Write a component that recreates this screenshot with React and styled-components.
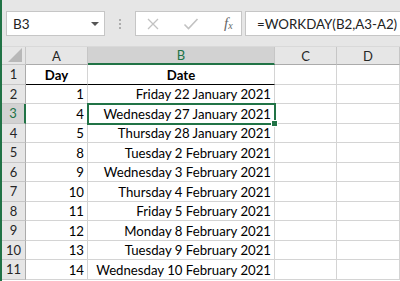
import React from 'react';
import styled, {createGlobalStyle} from 'styled-components';

const GlobalStyle = createGlobalStyle`
  html, body {
    margin: 0;
    padding: 0;
    background: #ffffff;
  }
  body {
    font-family: 'Lato', 'Liberation Sans', sans-serif;
  }
`;

const rows = [
    {n: 1, day: 'Day', date: 'Date', head: true},
    {n: 2, day: '1', date: 'Friday 22 January 2021'},
    {n: 3, day: '4', date: 'Wednesday 27 January 2021', active: true},
    {n: 4, day: '5', date: 'Thursday 28 January 2021'},
    {n: 5, day: '8', date: 'Tuesday 2 February 2021'},
    {n: 6, day: '9', date: 'Wednesday 3 February 2021'},
    {n: 7, day: '10', date: 'Thursday 4 February 2021'},
    {n: 8, day: '11', date: 'Friday 5 February 2021'},
    {n: 9, day: '12', date: 'Monday 8 February 2021'},
    {n: 10, day: '13', date: 'Tuesday 9 February 2021'},
    {n: 11, day: '14', date: 'Wednesday 10 February 2021'},
];

function App() {
    return (
        <Window>
            <GlobalStyle/>
            <FormulaBar>
                <NameBox>
                    <span>B3</span>
                    <Caret/>
                </NameBox>
                <Grip>
                    <i/><i/><i/>
                </Grip>
                <ButtonsBox>
                    <IconButton>
                        <svg width="14" height="14" viewBox="0 0 14 14">
                            <path d="M2 2 L12 12 M12 2 L2 12" stroke="#c2c2c2" strokeWidth="1.3" fill="none"/>
                        </svg>
                    </IconButton>
                    <IconButton>
                        <svg width="16" height="14" viewBox="0 0 16 14">
                            <path d="M1.5 7.5 L5.5 11.5 L14.5 2" stroke="#c2c2c2" strokeWidth="1.6" fill="none"/>
                        </svg>
                    </IconButton>
                    <Fx>f<sub>x</sub></Fx>
                </ButtonsBox>
                <FormulaBox>=WORKDAY(B2,A3-A2)</FormulaBox>
            </FormulaBar>
            <Sheet>
                <Corner>
                    <svg width="14" height="14" viewBox="0 0 14 14">
                        <path d="M14 0 L14 14 L0 14 Z" fill="#b8b8b8"/>
                    </svg>
                </Corner>
                <ColHead>A</ColHead>
                <ColHead $active>B</ColHead>
                <ColHead>C</ColHead>
                <ColHead>D</ColHead>
                {rows.map(r => (
                    <React.Fragment key={r.n}>
                        <RowHead $active={r.active}>{r.n}</RowHead>
                        <Cell $align={r.head ? 'center' : 'right'} $bold={r.head} $underline={r.head}>{r.day}</Cell>
                        <Cell $align={r.head ? 'center' : 'right'} $bold={r.head} $underline={r.head}
                              $selected={r.active}>
                            {r.date}
                            {r.active && <Handle/>}
                        </Cell>
                        <Cell/>
                        <Cell/>
                    </React.Fragment>
                ))}
            </Sheet>
        </Window>
    );
}

const Window = styled.div`
  width: 400px;
  height: 281px;
  box-sizing: border-box;
  border-left: 2px solid #217346;
  background: #ffffff;
  overflow: hidden;
`;

const FormulaBar = styled.div`
  height: 47px;
  box-sizing: border-box;
  background: #e6e6e6;
  display: flex;
  align-items: flex-start;
  padding: 11px 0 0 4px;
  border-bottom: 1px solid #d9d9d9;
`;

const Box = styled.div`
  height: 25px;
  box-sizing: border-box;
  background: #ffffff;
  border: 1px solid #c6c6c6;
  display: flex;
  align-items: center;
`;

const NameBox = styled(Box)`
  width: 99px;
  justify-content: space-between;
  padding: 0 5px 0 6px;
  font-size: 13.5px;
  color: #222;
`;

const Caret = styled.span`
  width: 0;
  height: 0;
  border-left: 4px solid transparent;
  border-right: 4px solid transparent;
  border-top: 4px solid #555;
`;

const Grip = styled.div`
  width: 30px;
  height: 25px;
  display: flex;
  flex-direction: column;
  align-items: center;
  justify-content: center;
  gap: 2px;

  i {
    width: 2px;
    height: 2px;
    background: #9a9a9a;
    border-radius: 1px;
  }
`;

const ButtonsBox = styled(Box)`
  width: 107px;
  padding-left: 10px;
`;

const IconButton = styled.div`
  width: 37px;
  display: flex;
  align-items: center;
`;

const Fx = styled.div`
  font-family: 'Liberation Serif', serif;
  font-style: italic;
  font-size: 15px;
  color: #666;
  margin-left: 4px;

  sub {
    font-size: 10px;
    vertical-align: -1px;
  }
`;

const FormulaBox = styled(Box)`
  flex: 1;
  margin-left: 3px;
  padding-left: 11px;
  border-right: none;
  font-size: 13.3px;
  color: #222;
  white-space: nowrap;
  overflow: hidden;
`;

const Sheet = styled.div`
  display: grid;
  grid-template-columns: 24px 62px 187px 62px 63px;
  grid-template-rows: 18px repeat(11, 19.5px);
`;

const Head = styled.div`
  box-sizing: border-box;
  background: ${p => p.$active ? '#d2d2d2' : '#e6e6e6'};
  color: ${p => p.$active ? '#217346' : '#262626'};
  font-size: 13px;
  display: flex;
  align-items: center;
  justify-content: center;
`;

const Corner = styled(Head)`
  border-right: 1px solid #c6c6c6;
  border-bottom: 1px solid #c6c6c6;
  align-items: flex-end;
  justify-content: flex-end;
  padding: 0 3px 2px 0;
`;

const ColHead = styled(Head)`
  border-right: 1px solid #c6c6c6;
  border-bottom: ${p => p.$active ? '2px solid #217346' : '1px solid #ababab'};
`;

const RowHead = styled(Head)`
  border-right: ${p => p.$active ? '2px solid #217346' : '1px solid #ababab'};
  border-bottom: 1px solid #c6c6c6;
`;

const Cell = styled.div`
  position: relative;
  box-sizing: border-box;
  border-right: 1px solid #d4d4d4;
  border-bottom: 1px solid ${p => p.$underline ? '#000000' : '#d4d4d4'};
  font-size: 13.2px;
  font-weight: ${p => p.$bold ? 700 : 400};
  color: #000;
  display: flex;
  align-items: center;
  justify-content: ${p => p.$align === 'center' ? 'center' : 'flex-end'};
  padding: 1px 3px 0;
  white-space: nowrap;
  outline: ${p => p.$selected ? '2px solid #217346' : 'none'};
  outline-offset: -1px;
  z-index: ${p => p.$selected ? 1 : 0};
`;

const Handle = styled.span`
  position: absolute;
  right: -4px;
  bottom: -4px;
  width: 5px;
  height: 5px;
  background: #217346;
  border: 1px solid #ffffff;
`;

export default App;
